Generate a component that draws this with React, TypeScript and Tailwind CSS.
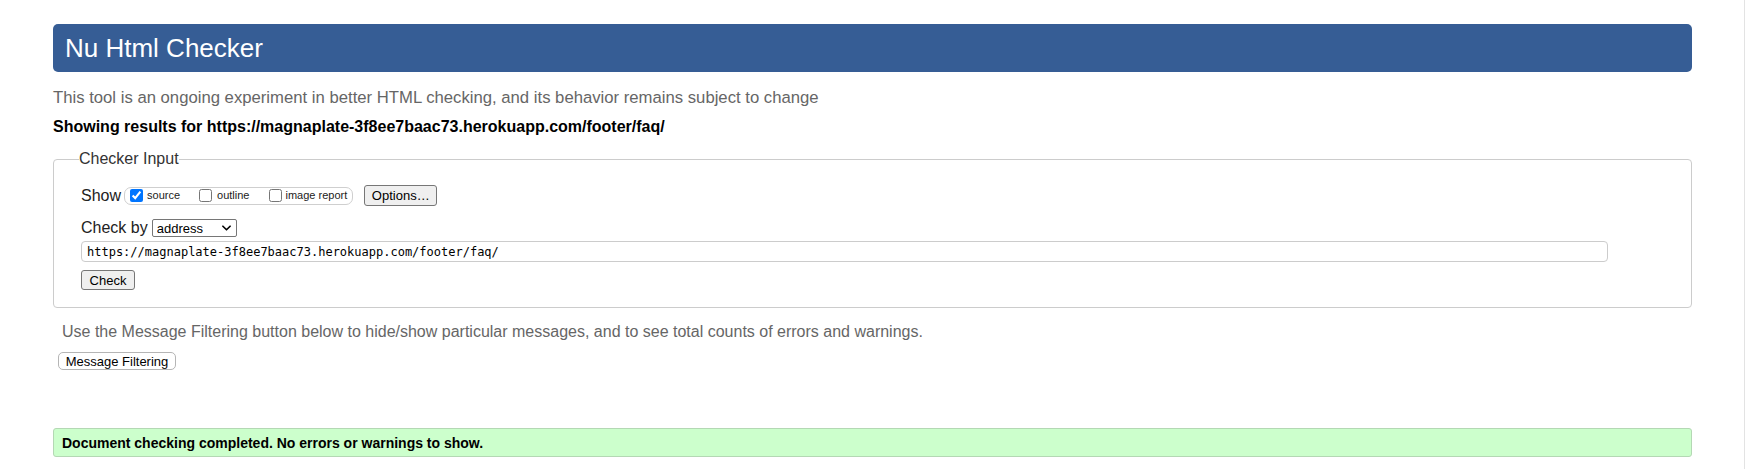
import { useState } from "react";

const url = "https://magnaplate-3f8ee7baac73.herokuapp.com/footer/faq/";

function Btn({ label, className = "" }: { label: string; className?: string }) {
  return (
    <button
      type="button"
      className={`flex items-center justify-center border border-[#767676] bg-[#efefef] rounded-[3px] text-[13px] leading-[15px] text-black ${className}`}
    >
      {label}
    </button>
  );
}

export default function App() {
  const [show, setShow] = useState({ source: true, outline: false, image: false });
  const [by, setBy] = useState("address");

  return (
    <div className="w-full h-[469px] bg-white border-r border-[#e3e3e3] pl-[53px] pr-[52px] pt-[24px] font-['Liberation_Sans',Arial,sans-serif] text-[16px] leading-[18px] text-[#222]">
      <header className="h-[48px] flex items-center rounded-[5px] bg-[#365d95] pl-[12px]">
        <h1 className="text-[26px] leading-[30px] text-white font-normal">Nu Html Checker</h1>
      </header>

      <p className="mt-[17px] text-[16.7px] text-[#666]">
        This tool is an ongoing experiment in better HTML checking, and its behavior remains subject to change
      </p>
      <p className="mt-[11px] font-bold text-black">Showing results for {url}</p>

      <fieldset className="mt-[14px] border border-[#cccccc] rounded-[4px] pl-[27px] pr-[83px] pt-[17px] pb-[17px]">
        <legend className="-ml-[2px] text-[16px] leading-[18px] text-[#333]">Checker Input</legend>

        <div className="h-[21px] flex items-center">
          <span className="text-[#222]">Show</span>
          <div className="ml-[3px] h-[18px] flex items-center border border-[#cfcfcf] rounded-[7px] pl-[5px] pr-[5px] text-[11px] leading-[13px] text-[#222]">
            <label className="flex items-center">
              <input
                type="checkbox"
                checked={show.source}
                onChange={(e) => setShow({ ...show, source: e.target.checked })}
                className="w-[13px] h-[13px] m-0"
              />
              <span className="ml-[4px]">source</span>
            </label>
            <label className="flex items-center ml-[19px]">
              <input
                type="checkbox"
                checked={show.outline}
                onChange={(e) => setShow({ ...show, outline: e.target.checked })}
                className="w-[13px] h-[13px] m-0"
              />
              <span className="ml-[5px]">outline</span>
            </label>
            <label className="flex items-center ml-[20px]">
              <input
                type="checkbox"
                checked={show.image}
                onChange={(e) => setShow({ ...show, image: e.target.checked })}
                className="w-[13px] h-[13px] m-0"
              />
              <span className="ml-[3px]">image report</span>
            </label>
          </div>
          <Btn label="Options…" className="ml-[11px] w-[73px] h-[21px]" />
        </div>

        <div className="mt-[12px] h-[19px] flex items-center">
          <span className="text-[#222]">Check by</span>
          <div className="relative ml-[4px] w-[85px] h-[18px]">
            <select
              value={by}
              onChange={(e) => setBy(e.target.value)}
              className="appearance-none w-full h-full border border-[#767676] rounded-[2px] bg-white pl-[4px] text-[13px] leading-[15px] text-black"
            >
              <option value="address">address</option>
              <option value="file">file upload</option>
              <option value="text">text input</option>
            </select>
            <svg
              viewBox="0 0 10 6"
              className="pointer-events-none absolute right-[6px] top-[6px] w-[9px] h-[6px]"
              fill="none"
              stroke="#000"
              strokeWidth="1.8"
              strokeLinecap="round"
              strokeLinejoin="round"
            >
              <path d="M1 1 L5 5 L9 1" />
            </svg>
          </div>
        </div>

        <input
          type="text"
          defaultValue={url}
          className="mt-[4px] block w-full h-[21px] border border-[#cccccc] rounded-[4px] pl-[5px] font-['DejaVu_Sans_Mono','Liberation_Mono',monospace] text-[12px] leading-[14px] text-black"
        />

        <Btn label="Check" className="mt-[8px] w-[54px] h-[20px]" />
      </fieldset>

      <p className="mt-[15px] pl-[9px] text-[#666]">
        Use the Message Filtering button below to hide/show particular messages, and to see total counts of errors and warnings.
      </p>
      <button
        type="button"
        className="mt-[11px] ml-[5px] w-[118px] h-[18px] flex items-center justify-center border border-[#b5b5b5] rounded-[5px] bg-white text-[13px] leading-[15px] text-black"
      >
        Message Filtering
      </button>

      <div className="mt-[58px] h-[29px] flex items-center border border-[#b4d8b4] rounded-[3px] bg-[#ccffcc] pl-[8px]">
        <span className="text-[14px] leading-[16px] font-bold text-black">
          Document checking completed. No errors or warnings to show.
        </span>
      </div>
    </div>
  );
}
